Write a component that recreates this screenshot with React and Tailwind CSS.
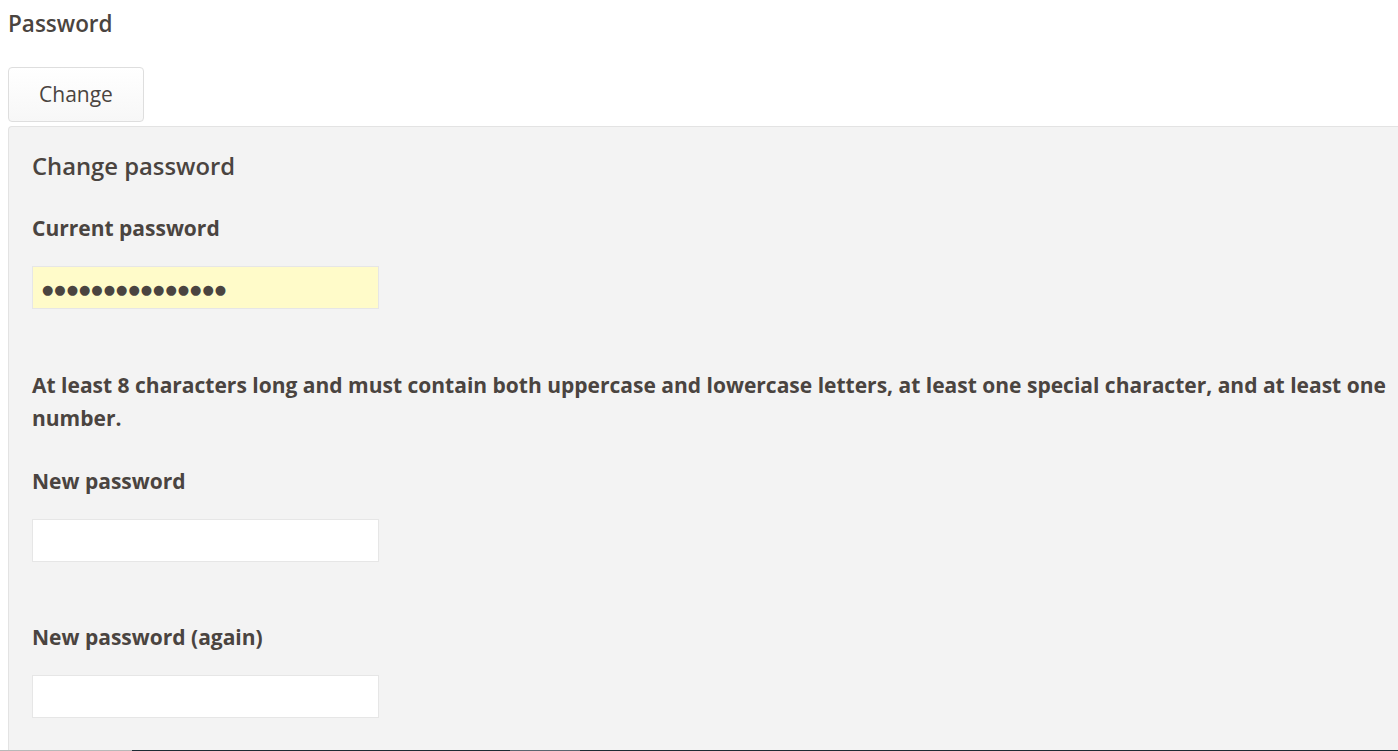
const Field = ({ label, value, autofill }) => (
  <div>
    <label className="block text-[21px] leading-[30px] font-bold mb-[23px]">{label}</label>
    <input
      type="text"
      defaultValue={value}
      readOnly
      className={`block w-[347px] h-[43px] pl-[9px] pt-[4px] border border-[#e6e6e6] outline-none text-[13px] tracking-[1px] text-[#4a4440] ${
        autofill ? 'bg-[#fffbc9]' : 'bg-white'
      }`}
      style={{ fontFamily: '"DejaVu Sans", sans-serif' }}
    />
  </div>
);

const App = () => {
  return (
    <div
      className="h-[751px] w-[1398px] overflow-hidden bg-white flex flex-col text-[#4a4440]"
      style={{ fontFamily: '"Open Sans", "Noto Sans", sans-serif' }}
    >
      <h2 className="pl-2 pt-[9px] text-[22.5px] leading-[30px] font-semibold">Password</h2>

      <div className="pl-2 mt-[28px]">
        <button className="w-[136px] h-[55px] rounded-[4px] border border-[#dedede] bg-gradient-to-b from-white to-[#f7f7f7] text-[21px] text-[#4a4440]">
          Change
        </button>
      </div>

      <div className="ml-2 mt-1 flex-1 -mr-8 bg-[#f3f3f3] border-l border-t border-[#e3e3e3] rounded-tl-[4px] pl-[23px] pr-4 pt-[21px]">
        <h3 className="text-[23.8px] leading-[36px] font-semibold mb-[29px]">Change password</h3>

        <Field label="Current password" value="●●●●●●●●●●●●●●●" autofill />

        <p className="mt-[60px] text-[21px] leading-[33px] font-bold">
          At least 8 characters long and must contain both uppercase and lowercase letters, at least one special
          character, and at least one number.
        </p>

        <div className="mt-[31px]">
          <Field label="New password" value="" />
        </div>

        <div className="mt-[60px]">
          <Field label="New password (again)" value="" />
        </div>
      </div>

      <div className="h-px flex shrink-0">
        <div className="w-[132px] bg-[#b8b8b8]" />
        <div className="w-[378px] bg-[#1e2b33]" />
        <div className="w-[70px] bg-[#5b6670]" />
        <div className="flex-1 bg-[#1e2b33]" />
      </div>
    </div>
  );
};

export default App;
